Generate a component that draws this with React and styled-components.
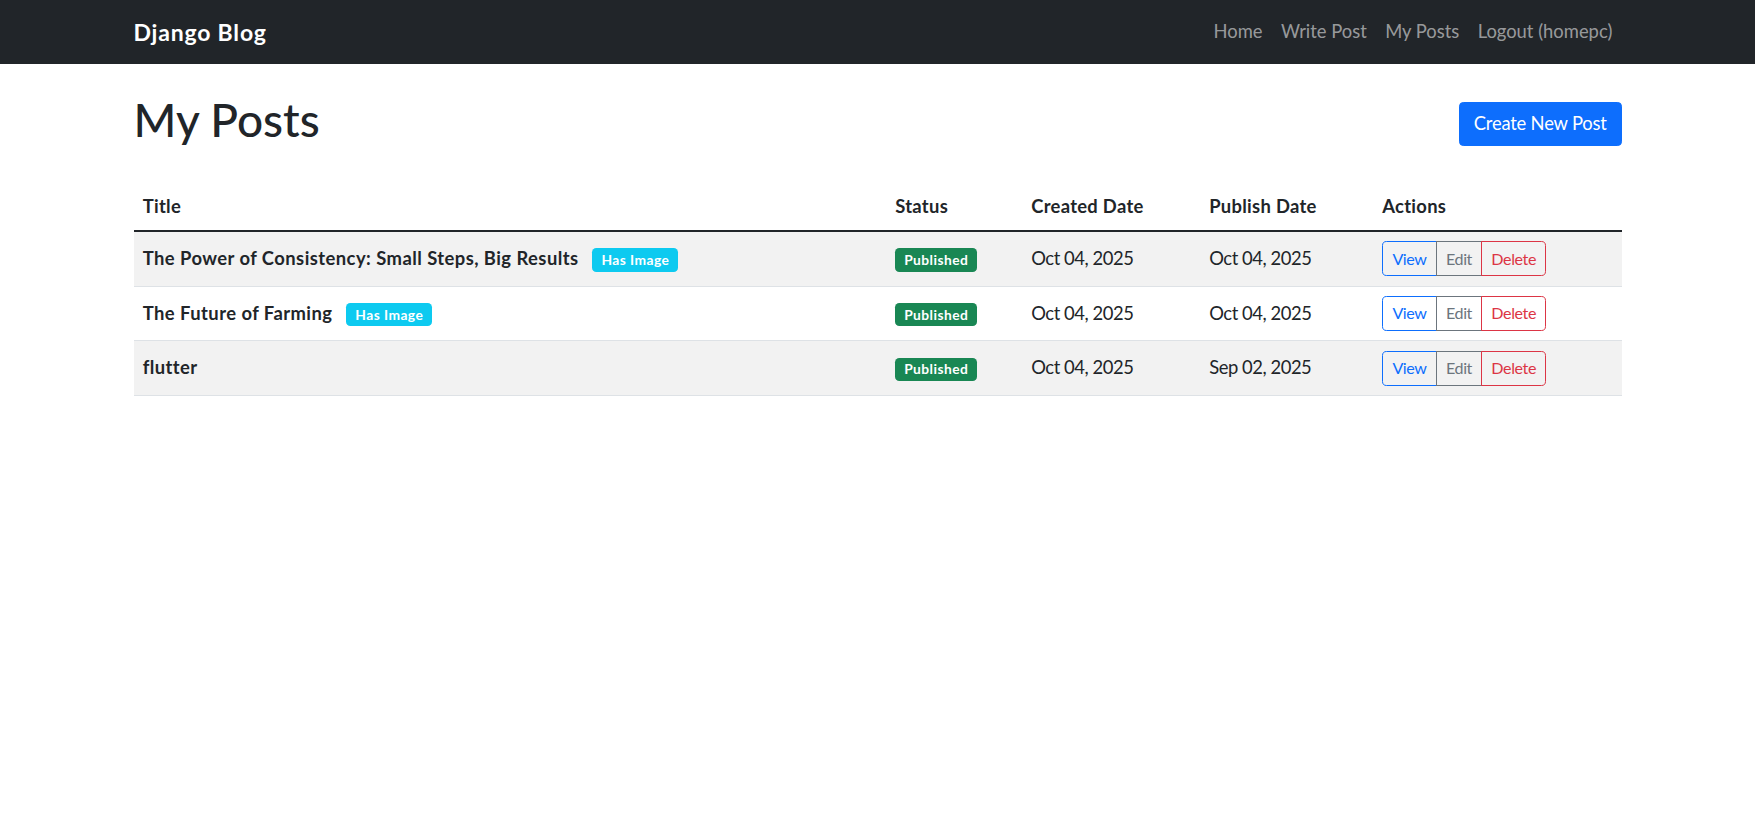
import React from "react";
import styled, { createGlobalStyle } from "styled-components";

const GlobalStyle = createGlobalStyle`
  *, *::before, *::after { box-sizing: border-box; }
  body {
    margin: 0;
    font-family: Lato, "Open Sans", sans-serif;
    font-size: 18.4px;
    line-height: 1.5;
    color: #212529;
    background: #fff;
  }
`;

const Navbar = styled.nav`
  background: #212529;
  padding: 9.2px 0;
`;

const Container = styled.div`
  width: 100%;
  max-width: 1518px;
  margin: 0 auto;
  padding: 0 15px;
`;

const NavInner = styled(Container)`
  display: flex;
  align-items: center;
  justify-content: space-between;
`;

const Brand = styled.a`
  color: #fff;
  font-size: 23px;
  font-weight: 700;
  letter-spacing: 0.8px;
  padding: 5.75px 0;
  text-decoration: none;
`;

const NavList = styled.ul`
  display: flex;
  list-style: none;
  margin: 0;
  padding: 0;
`;

const NavLink = styled.a`
  display: block;
  padding: 9.2px;
  color: rgba(255, 255, 255, 0.55);
  text-decoration: none;
`;

const Main = styled(Container)`
  margin-top: 27.6px;
`;

const Header = styled.div`
  display: flex;
  align-items: center;
  justify-content: space-between;
  margin-bottom: 27.6px;
`;

const Title = styled.h1`
  font-size: 46px;
  font-weight: 500;
  line-height: 1.2;
  margin: 0 0 9.2px;
`;

const PrimaryButton = styled.a`
  display: inline-block;
  background: #0d6efd;
  color: #fff;
  border: 1px solid #0d6efd;
  border-radius: 4.3px;
  padding: 7px 13.8px;
  font-size: 18.4px;
  line-height: 1.5;
  letter-spacing: -0.2px;
  text-decoration: none;
`;

const Table = styled.table`
  width: 100%;
  border-collapse: collapse;
  table-layout: fixed;
  vertical-align: top;
  margin-bottom: 18.4px;
`;

const Th = styled.th`
  text-align: left;
  font-weight: 700;
  letter-spacing: 0.3px;
  padding: 9.2px;
  border-bottom: 2.3px solid #212529;
  width: ${(p) => (p.$w ? `${p.$w}px` : "auto")};
`;

const Row = styled.tr`
  background: ${(p) => (p.$striped ? "#f2f2f2" : "transparent")};
`;

const Td = styled.td`
  padding: 9.2px;
  border-bottom: 1.15px solid #dee2e6;
`;

const PostTitle = styled.strong`
  font-weight: 700;
  letter-spacing: 0.45px;
`;

const DateText = styled.span`
  letter-spacing: -0.45px;
`;

const Badge = styled.span`
  display: inline-block;
  padding: 0.35em 0.65em;
  font-size: 0.75em;
  font-weight: 700;
  letter-spacing: 0.45px;
  line-height: 1;
  color: #fff;
  background: ${(p) => p.$bg};
  border-radius: 4.3px;
  white-space: nowrap;
  vertical-align: baseline;
  margin-left: ${(p) => (p.$ml ? "9.2px" : "0")};
`;

const BtnGroup = styled.div`
  display: inline-flex;
`;

const SmallButton = styled.a`
  position: relative;
  display: inline-block;
  padding: 4.6px 9.2px;
  font-size: 16.1px;
  line-height: 1.5;
  letter-spacing: -0.4px;
  color: ${(p) => p.$color};
  border: 1px solid ${(p) => p.$color};
  text-decoration: none;
  background: transparent;
  margin-left: -1px;
  &:first-child {
    margin-left: 0;
    border-radius: 4.6px 0 0 4.6px;
  }
  &:last-child {
    border-radius: 0 4.6px 4.6px 0;
  }
`;

const posts = [
  { title: "The Power of Consistency: Small Steps, Big Results", image: true, created: "Oct 04, 2025", published: "Oct 04, 2025" },
  { title: "The Future of Farming", image: true, created: "Oct 04, 2025", published: "Oct 04, 2025" },
  { title: "flutter", image: false, created: "Oct 04, 2025", published: "Sep 02, 2025" },
];

export default function App() {
  return (
    <>
      <GlobalStyle />
      <Navbar>
        <NavInner>
          <Brand href="#">Django Blog</Brand>
          <NavList>
            <li><NavLink href="#">Home</NavLink></li>
            <li><NavLink href="#">Write Post</NavLink></li>
            <li><NavLink href="#">My Posts</NavLink></li>
            <li><NavLink href="#">Logout (homepc)</NavLink></li>
          </NavList>
        </NavInner>
      </Navbar>
      <Main>
        <Header>
          <Title>My Posts</Title>
          <PrimaryButton href="#">Create New Post</PrimaryButton>
        </Header>
        <Table>
          <thead>
            <tr>
              <Th $w={752.5}>Title</Th>
              <Th $w={136}>Status</Th>
              <Th $w={178}>Created Date</Th>
              <Th $w={173}>Publish Date</Th>
              <Th>Actions</Th>
            </tr>
          </thead>
          <tbody>
            {posts.map((p, i) => (
              <Row key={p.title} $striped={i % 2 === 0}>
                <Td>
                  <PostTitle>{p.title}</PostTitle>{" "}
                  {p.image && <Badge $bg="#0dcaf0" $ml>Has Image</Badge>}
                </Td>
                <Td><Badge $bg="#198754">Published</Badge></Td>
                <Td><DateText>{p.created}</DateText></Td>
                <Td><DateText>{p.published}</DateText></Td>
                <Td>
                  <BtnGroup>
                    <SmallButton href="#" $color="#0d6efd">View</SmallButton>
                    <SmallButton href="#" $color="#6c757d">Edit</SmallButton>
                    <SmallButton href="#" $color="#dc3545">Delete</SmallButton>
                  </BtnGroup>
                </Td>
              </Row>
            ))}
          </tbody>
        </Table>
      </Main>
    </>
  );
}
